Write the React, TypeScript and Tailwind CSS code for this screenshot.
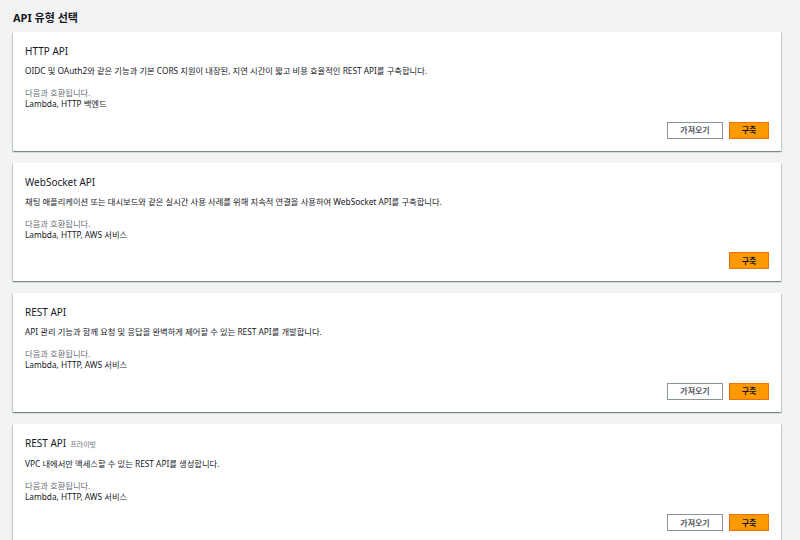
const apis = [
  {
    title: "HTTP API",
    tag: "",
    desc: "OIDC 및 OAuth2와 같은 기능과 기본 CORS 지원이 내장된, 지연 시간이 짧고 비용 효율적인 REST API를 구축합니다.",
    compat: "Lambda, HTTP 백엔드",
    canImport: true,
  },
  {
    title: "WebSocket API",
    tag: "",
    desc: "채팅 애플리케이션 또는 대시보드와 같은 실시간 사용 사례를 위해 지속적 연결을 사용하여 WebSocket API를 구축합니다.",
    compat: "Lambda, HTTP, AWS 서비스",
    canImport: false,
  },
  {
    title: "REST API",
    tag: "",
    desc: "API 관리 기능과 함께 요청 및 응답을 완벽하게 제어할 수 있는 REST API를 개발합니다.",
    compat: "Lambda, HTTP, AWS 서비스",
    canImport: true,
  },
  {
    title: "REST API",
    tag: "프라이빗",
    desc: "VPC 내에서만 액세스할 수 있는 REST API를 생성합니다.",
    compat: "Lambda, HTTP, AWS 서비스",
    canImport: true,
  },
];

const ApiCard = ({ api }: any) => {
  return (
    <div className="bg-white px-[12px] pt-[12px] pb-[12px] shadow-[0_1px_1px_0_rgba(0,28,36,0.3),1px_1px_1px_0_rgba(0,28,36,0.15),-1px_1px_1px_0_rgba(0,28,36,0.15)]">
      <div className="flex items-baseline gap-[4px] text-[10px] leading-[15px] text-[#16191f]">
        <span>{api.title}</span>
        {api.tag && <span className="text-[7px] text-[#687078]">{api.tag}</span>}
      </div>
      <p className="mt-[6px] text-[8.3px] leading-[12px] text-[#16191f]">{api.desc}</p>
      <div className="mt-[10px] text-[8.3px] leading-[11px]">
        <p className="text-[#687078]">다음과 호환됩니다.</p>
        <p className="text-[#16191f]">{api.compat}</p>
      </div>
      <div className="mt-[12.6px] flex justify-end gap-[6px]">
        {api.canImport && (
          <button className="h-[17px] w-[56px] border border-[#879596] bg-white text-[8px] font-bold text-[#545b64]">
            가져오기
          </button>
        )}
        <button className="h-[17px] w-[40px] border border-[#ec7211] bg-[#ff9900] text-[8px] font-bold text-[#16191f]">
          구축
        </button>
      </div>
    </div>
  );
};

export default function App() {
  return (
    <div className="min-h-screen bg-[#f2f3f3] pl-[13px] pr-[19px] pt-[11px] pb-[20px] font-['Noto_Sans','Noto_Sans_CJK_KR',sans-serif]">
      <h2 className="mb-[7px] text-[11px] font-bold leading-[14px] text-[#16191f]">API 유형 선택</h2>
      <div className="flex flex-col gap-[12px]">
        {apis.map((api, i) => (
          <ApiCard key={i} api={api} />
        ))}
      </div>
    </div>
  );
}
